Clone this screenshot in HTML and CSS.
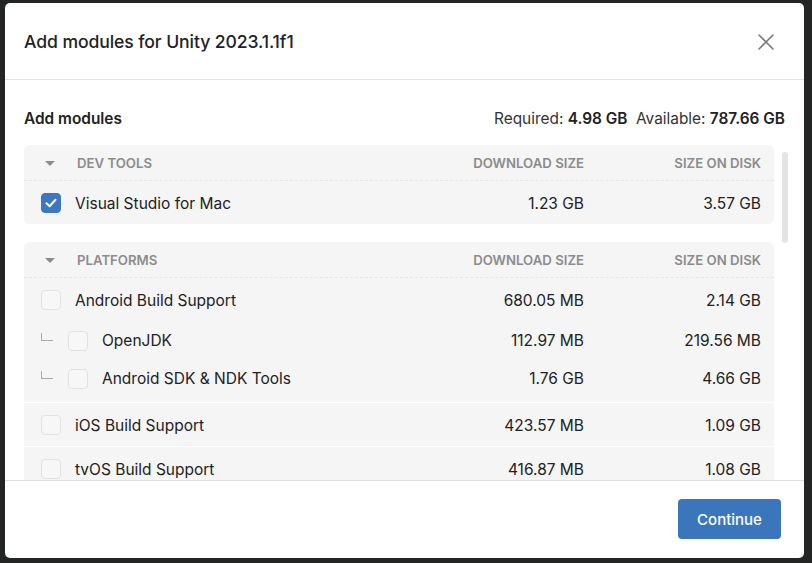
FILE: index.html
```html
<!DOCTYPE html>
<html>
<head>
<meta charset="utf-8">
<link rel="stylesheet" href="styles.css">
</head>
<body>
<div class="dialog">
  <header class="dlg-head">
    <h1 class="title">Add modules for Unity 2023.1.1f1</h1>
    <button class="close" aria-label="Close">
      <svg width="18" height="18" viewBox="0 0 18 18"><path d="M2 2L16 16M16 2L2 16" stroke="#7a7a7a" stroke-width="1.6" fill="none" stroke-linecap="round"/></svg>
    </button>
  </header>
  <main class="dlg-body">
    <div class="summary">
      <span class="summary-title">Add modules</span>
      <span class="summary-info">Required: <b>4.98 GB</b>&nbsp; Available: <b>787.66 GB</b></span>
    </div>
    <div class="list-wrap">
      <div class="list">
        <section class="group">
          <div class="grow ghead">
            <span class="gname"><span class="tri"></span>DEV TOOLS</span>
            <span class="col">DOWNLOAD SIZE</span>
            <span class="col">SIZE ON DISK</span>
          </div>
          <div class="grow item">
            <span class="name"><span class="cb checked"><svg width="12" height="10" viewBox="0 0 12 10"><path d="M1.5 5.2L4.6 8.2L10.5 1.8" stroke="#fff" stroke-width="2" fill="none" stroke-linecap="round" stroke-linejoin="round"/></svg></span>Visual Studio for Mac</span>
            <span class="col num">1.23 GB</span>
            <span class="col num">3.57 GB</span>
          </div>
        </section>
        <section class="group">
          <div class="grow ghead">
            <span class="gname"><span class="tri"></span>PLATFORMS</span>
            <span class="col">DOWNLOAD SIZE</span>
            <span class="col">SIZE ON DISK</span>
          </div>
          <div class="block">
            <div class="grow item">
              <span class="name"><span class="cb"></span>Android Build Support</span>
              <span class="col num">680.05 MB</span>
              <span class="col num">2.14 GB</span>
            </div>
            <div class="grow sub">
              <span class="name"><span class="tree"></span><span class="cb"></span>OpenJDK</span>
              <span class="col num">112.97 MB</span>
              <span class="col num">219.56 MB</span>
            </div>
            <div class="grow sub">
              <span class="name"><span class="tree"></span><span class="cb"></span>Android SDK &amp; NDK Tools</span>
              <span class="col num">1.76 GB</span>
              <span class="col num">4.66 GB</span>
            </div>
          </div>
          <div class="grow item bt">
            <span class="name"><span class="cb"></span>iOS Build Support</span>
            <span class="col num">423.57 MB</span>
            <span class="col num">1.09 GB</span>
          </div>
          <div class="grow item bt">
            <span class="name"><span class="cb"></span>tvOS Build Support</span>
            <span class="col num">416.87 MB</span>
            <span class="col num">1.08 GB</span>
          </div>
        </section>
      </div>
      <div class="thumb"></div>
    </div>
  </main>
  <footer class="dlg-foot">
    <button class="primary">Continue</button>
  </footer>
</div>
</body>
</html>
```

FILE: styles.css
```css
* { box-sizing: border-box; }
html, body { margin: 0; padding: 0; }
body {
  background: #232524;
  width: 812px;
  height: 563px;
  overflow: hidden;
  font-family: Inter, "Noto Sans", "Liberation Sans", sans-serif;
  color: #222;
}
.dialog {
  margin: 3px 0 0 5px;
  width: 799px;
  height: 555px;
  background: #fff;
  border-radius: 5px;
  display: flex;
  flex-direction: column;
  overflow: hidden;
}
.dlg-head {
  height: 77px;
  flex: none;
  display: flex;
  align-items: center;
  justify-content: space-between;
  padding: 0 29px 0 19px;
  border-bottom: 1px solid #e3e3e3;
}
.title {
  margin: 0;
  font-size: 17.6px;
  font-weight: 500;
  color: #222;
  letter-spacing: -0.1px;
}
.close {
  border: 0;
  background: none;
  padding: 0;
  width: 18px;
  height: 18px;
  display: flex;
  margin-top: 1px;
}
.dlg-body {
  flex: 1;
  min-height: 0;
  display: flex;
  flex-direction: column;
  padding: 0 19px 0 19px;
}
.summary {
  display: flex;
  justify-content: space-between;
  align-items: center;
  height: 20px;
  margin-top: 28px;
  margin-bottom: 17px;
  font-size: 15.4px;
}
.summary-title { font-weight: 600; color: #222; }
.summary-info { color: #333; }
.summary-info b { font-weight: 600; color: #222; }
.list-wrap {
  flex: 1;
  min-height: 0;
  position: relative;
  padding-right: 11px;
}
.list {
  height: 100%;
  overflow: hidden;
  display: flex;
  flex-direction: column;
  gap: 18px;
}
.thumb {
  position: absolute;
  right: -3px;
  top: 7px;
  width: 6px;
  height: 91px;
  border-radius: 3px;
  background: #e4e4e4;
}
.group {
  background: #f5f5f5;
  border-radius: 6px;
  flex: none;
}
.grow {
  display: grid;
  grid-template-columns: 1fr 160px 177px;
  align-items: center;
  padding: 0 13px 0 17px;
}
.ghead {
  height: 36px;
  border-bottom: 1px dashed #e6e6e6;
  font-size: 13.2px;
  font-weight: 600;
  color: #8c8c8c;
  letter-spacing: 0;
}
.gname { display: flex; align-items: center; }
.tri {
  width: 0;
  height: 0;
  border-left: 5px solid transparent;
  border-right: 5px solid transparent;
  border-top: 5px solid #8c8c8c;
  margin: 1px 22px 0 4px;
}
.col { text-align: right; }
.item {
  height: 43px;
  padding-top: 1px;
  font-size: 15.5px;
}
.bt { border-top: 1px solid #fff; height: 44px; }
.block { padding-bottom: 5px; }
.sub {
  height: 38px;
  padding-top: 1px;
  font-size: 15.5px;
}
.name { display: flex; align-items: center; }
.num { color: #222; }
.cb {
  width: 20px;
  height: 20px;
  border-radius: 4px;
  border: 1px solid #e2e2e2;
  background: #f7f7f7;
  margin-right: 14px;
  display: flex;
  align-items: center;
  justify-content: center;
  flex: none;
}
.cb.checked {
  background: #3d77c0;
  border-color: #3d77c0;
}
.tree {
  width: 12px;
  height: 8px;
  border-left: 1px solid #aaa;
  border-bottom: 1px solid #aaa;
  margin: -8px 15px 0 0;
  flex: none;
}
.dlg-foot {
  flex: none;
  height: 78px;
  border-top: 1px solid #dedede;
  display: flex;
  justify-content: flex-end;
  align-items: flex-start;
  padding: 18px 23px 0 0;
}
.primary {
  width: 103px;
  height: 40px;
  border: 0;
  border-radius: 4px;
  background: #3b76bd;
  color: #fff;
  font-family: inherit;
  font-size: 15px;
  font-weight: 500;
}
```
